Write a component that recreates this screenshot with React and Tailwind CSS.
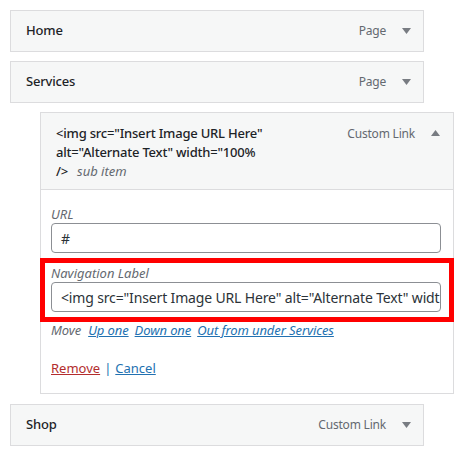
const font = { fontFamily: '"Noto Sans", "Open Sans", sans-serif' };

const Arrow = ({ up = false }) => (
  <svg width="9" height="6" viewBox="0 0 9 6" className="shrink-0">
    {up ? (
      <path d="M4.5 0 L9 6 L0 6 Z" fill="#787c82" />
    ) : (
      <path d="M0 0 L9 0 L4.5 6 Z" fill="#787c82" />
    )}
  </svg>
);

const MenuItem = ({ title, type }) => (
  <div className="w-[414px] h-[42px] border border-[#dcdcde] bg-[#f6f7f7] flex items-center pl-[15px] pr-[12px]">
    <span className="text-[13px] font-medium tracking-[-0.2px] text-[#1d2327]">{title}</span>
    <span className="ml-auto text-[12px] tracking-[-0.2px] text-[#646970]">{type}</span>
    <span className="ml-[16px]">
      <Arrow />
    </span>
  </div>
);

export default function App() {
  return (
    <div className="w-[468px] h-[452px] bg-white pt-[10px] pl-[10px]" style={font}>
      <MenuItem title="Home" type="Page" />
      <div className="mt-[9px]">
        <MenuItem title="Services" type="Page" />
      </div>

      {/* open sub item */}
      <div className="mt-[9px] ml-[30px] w-[414px]">
        <div className="h-[78px] border border-[#dcdcde] bg-[#f6f7f7] flex items-start pl-[15px] pr-[13px] pt-[11px]">
          <div className="text-[13px] leading-[19px] font-medium tracking-[-0.2px] text-[#1d2327]">
            {'<img src="Insert Image URL Here"'}
            <br />
            {'alt="Alternate Text" width="100%'}
            <br />
            {'/>'}
            <span className="ml-[9px] italic font-normal tracking-normal text-[#646970]">sub item</span>
          </div>
          <span className="ml-auto text-[12px] leading-[19px] tracking-[-0.2px] text-[#646970]">Custom Link</span>
          <span className="ml-[16px] mt-[6px]">
            <Arrow up />
          </span>
        </div>

        <div className="border border-t-0 border-[#dcdcde] bg-white pl-[10px] pr-[12px] pt-[16px] pb-[16px]">
          <label className="block text-[13px] leading-[17px] italic text-[#646970]">URL</label>
          <div className="w-[390px] h-[30px] border border-[#8c8f94] rounded-[4px] flex items-center pl-[9px] text-[14px] text-[#2c3338]">
            #
          </div>

          <div className="mt-[5px] ml-[-11px] mr-[-13px] border-[5px] border-[#ff0000] pl-[6px] pt-[2px] pb-[5px]">
            <label className="block text-[13px] leading-[17px] italic text-[#646970]">
              Navigation Label
            </label>
            <div className="w-[390px] h-[30px] border border-[#8c8f94] rounded-[4px] overflow-hidden">
              <div className="h-full flex items-center pl-[9px] whitespace-nowrap text-[14px] tracking-[-0.15px] text-[#2c3338]">
                {'<img src="Insert Image URL Here" alt="Alternate Text" width="100%" />'}
              </div>
            </div>
          </div>

          <div className="text-[13px] leading-[17px] italic text-[#646970] flex gap-[6px] tracking-[-0.1px]">
            <span className="mr-[1px]">Move</span>
            <a className="text-[#2271b1] underline">Up one</a>
            <a className="text-[#2271b1] underline">Down one</a>
            <a className="text-[#2271b1] underline">Out from under Services</a>
          </div>

          <div className="mt-[21px] text-[13px] leading-[17px]">
            <a className="text-[#b32d2e] underline">Remove</a>
            <span className="text-[#2271b1] mx-[4px]">|</span>
            <a className="text-[#2271b1] underline">Cancel</a>
          </div>
        </div>
      </div>

      <div className="mt-[10px]">
        <MenuItem title="Shop" type="Custom Link" />
      </div>
    </div>
  );
}
